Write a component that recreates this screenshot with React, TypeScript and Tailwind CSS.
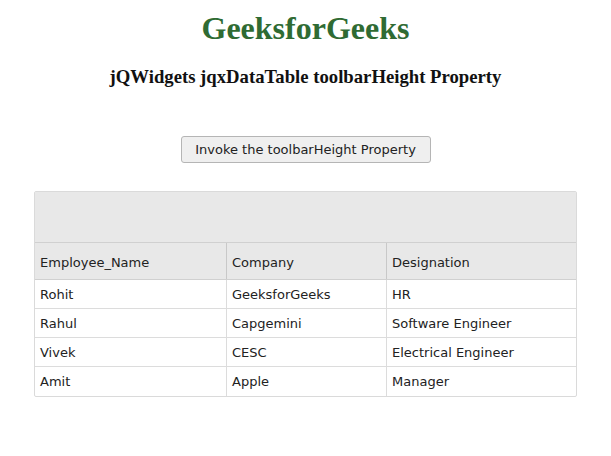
import React from "react";

const rows = [
  ["Rohit", "GeeksforGeeks", "HR"],
  ["Rahul", "Capgemini", "Software Engineer"],
  ["Vivek", "CESC", "Electrical Engineer"],
  ["Amit", "Apple", "Manager"],
];

export default function App() {
  const cell = "px-[5px] flex items-center";
  return (
    <div className="w-[611px] h-[456px] bg-white relative" style={{ fontFamily: "'DejaVu Sans', Verdana, sans-serif" }}>
      <div className="flex flex-col items-center">
        <h1 className="mt-[10px] text-[32px] leading-[37px] font-bold text-[#2f6b33]" style={{ fontFamily: "'Liberation Serif', serif" }}>
          GeeksforGeeks
        </h1>
        <h3 className="mt-[19px] text-[18.72px] leading-[22px] font-bold text-[#111]" style={{ fontFamily: "'Liberation Serif', serif" }}>
          jQWidgets jqxDataTable toolbarHeight Property
        </h3>
        <button className="mt-[48px] w-[250px] h-[27px] bg-[#efefef] border border-[#b5b5b5] rounded-[3px] text-[13px] text-[#222]">
          Invoke the toolbarHeight Property
        </button>
      </div>
      <div className="ml-[34px] mt-[28px] w-[543px] border border-[#dadada] rounded-[2px] text-[13px] text-[#222]">
        <div className="h-[51px] bg-[#e8e8e8] border-b border-[#d0d0d0]" />
        <div className="grid grid-cols-[192px_160px_1fr] h-[37px] bg-[#e8e8e8] border-b border-[#d0d0d0]">
          <div className={cell + " pt-[3px] border-r border-[#c8c8c8]"}>Employee_Name</div>
          <div className={cell + " pt-[3px] border-r border-[#c8c8c8]"}>Company</div>
          <div className={cell + " pt-[3px]"}>Designation</div>
        </div>
        {rows.map((r, i) => (
          <div key={i} className={"grid grid-cols-[192px_160px_1fr] h-[29px] " + (i < rows.length - 1 ? "border-b border-[#dcdcdc]" : "")}>
            <div className={cell + " pt-[1px] border-r border-[#dcdcdc]"}>{r[0]}</div>
            <div className={cell + " pt-[1px] border-r border-[#dcdcdc]"}>{r[1]}</div>
            <div className={cell + " pt-[1px]"}>{r[2]}</div>
          </div>
        ))}
      </div>
    </div>
  );
}
